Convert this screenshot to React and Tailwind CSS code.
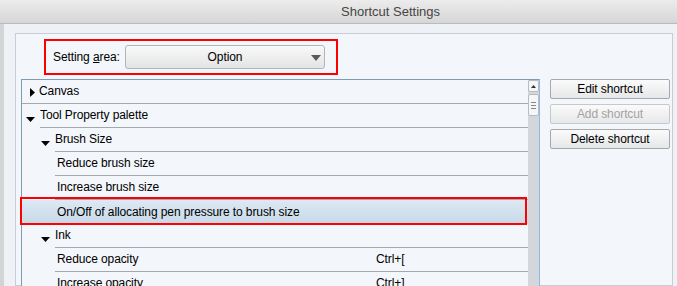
const rows = [
  { label: "Canvas", level: 0, arrow: "right" },
  { label: "Tool Property palette", level: 1, arrow: "down" },
  { label: "Brush Size", level: 2, arrow: "down" },
  { label: "Reduce brush size", level: 3 },
  { label: "Increase brush size", level: 3 },
  { label: "On/Off of allocating pen pressure to brush size", level: 3, selected: true },
  { label: "Ink", level: 2, arrow: "down" },
  { label: "Reduce opacity", level: 3, key: "Ctrl+[" },
  { label: "Increase opacity", level: 3, key: "Ctrl+]" },
];

function DownArrow({ className }) {
  return (
    <svg width="9" height="5" viewBox="0 0 9 5" className={className}>
      <path d="M0 0H9L4.5 5Z" fill="#000" />
    </svg>
  );
}

function RightArrow({ className }) {
  return (
    <svg width="5" height="9" viewBox="0 0 5 9" className={className}>
      <path d="M0 0V9L5 4.5Z" fill="#000" />
    </svg>
  );
}

function Row({ row }) {
  // leaf rows: line starts at the text, text has a 2px nudge
  if (row.level === 0) {
    return (
      <div className="flex h-[24px] items-center border-b border-[#a4a8ac] pb-[1px] pl-[8px]">
        <RightArrow className="mt-[2px]" />
        <span className="ml-[4px]">{row.label}</span>
      </div>
    );
  }
  const spacer = row.level === 1 ? "w-[18px]" : "w-[33px]";
  const arrowPad = row.level === 1 ? "pl-[4px]" : "pl-[19px]";
  return (
    <div className="relative flex h-[24px]">
      <div className={`flex ${spacer} ${arrowPad} shrink-0 items-center`}>
        {row.arrow && <DownArrow className="mt-[7px]" />}
      </div>
      <div
        className={`flex flex-1 items-center border-b border-[#a4a8ac] pb-[1px] ${
          row.level === 3 ? "pl-[2px]" : ""
        }`}
      >
        <span className="w-[319px] shrink-0">{row.label}</span>
        {row.key && <span>{row.key}</span>}
      </div>
    </div>
  );
}

function SelectedRow({ row }) {
  return (
    <div className="relative flex h-[24px] bg-gradient-to-b from-[#dde9f4] to-[#c7d9e8]">
      <div className="w-[33px] shrink-0" />
      <div className="flex flex-1 items-center pb-[1px] pl-[2px]">{row.label}</div>
      {/* red annotation frame */}
      <div className="pointer-events-none absolute -top-[3px] -bottom-[1px] -left-[2px] right-[1px] border-2 border-[#ff0000]" />
    </div>
  );
}

function Scrollbar() {
  return (
    <div className="flex w-[11px] shrink-0 flex-col bg-[#d3d7db]">
      <div className="flex h-[12px] shrink-0 items-center justify-center rounded-[2px] border border-[#b8bcc0] bg-[#f4f6f8]">
        <svg width="5" height="3" viewBox="0 0 5 3">
          <path d="M0 3H5L2.5 0Z" fill="#333" />
        </svg>
      </div>
      <div className="mt-[2px] flex h-[22px] shrink-0 flex-col items-center justify-center gap-[2px] rounded-[2px] border border-[#b8bcc0] bg-[#f4f6f8]">
        <div className="h-px w-[5px] bg-[#888]" />
        <div className="h-px w-[5px] bg-[#888]" />
        <div className="h-px w-[5px] bg-[#888]" />
      </div>
    </div>
  );
}

function Button({ children, disabled }) {
  return (
    <button
      className={`h-[20px] w-[120px] shrink-0 rounded-[2px] border bg-gradient-to-b from-[#fbfbfb] to-[#e6e7e8] text-[12px] leading-none ${
        disabled ? "border-[#c6c9cc] text-[#a3a3a3]" : "border-[#a6a9ac] text-black"
      }`}
    >
      {children}
    </button>
  );
}

export default function App() {
  return (
    <div
      className="h-[286px] w-[677px] overflow-hidden bg-[#eef2f7] text-[12px] tracking-[-0.1px] text-black"
      style={{ fontFamily: '"Liberation Sans", Arial, sans-serif' }}
    >
      <div className="flex h-[24px] items-center border-b border-[#b9bcbf] bg-gradient-to-b from-[#ececec] to-[#d6d6d6] pl-[341px] text-[13px] tracking-normal text-[#454545]">
        Shortcut Settings
      </div>

      <div className="flex h-[262px] border-l-4 border-[#d2d4d6]">
        <div className="ml-[11px] mt-[9px] flex w-[658px] shrink-0 flex-col border border-[#c9cdd2] bg-[#f3f6fa]">
          <div className="ml-[28px] mt-[5px] flex h-[36px] w-[294px] shrink-0 items-center border-2 border-[#ff0000] pl-[7px]">
            <span className="w-[72px] shrink-0">
              Setting <span className="underline">a</span>rea:
            </span>
            <div className="relative flex h-[24px] w-[200px] shrink-0 items-center justify-center rounded-[3px] border border-[#b3b6b9] bg-gradient-to-b from-[#f9f9f9] to-[#e3e4e5]">
              Option
              <svg width="10" height="6" viewBox="0 0 10 6" className="absolute right-[3px] top-[9px]">
                <path d="M0 0H10L5 6Z" fill="#5a5a5a" />
              </svg>
            </div>
          </div>

          <div className="ml-[5px] mt-[4px] flex shrink-0 gap-[10px]">
            <div className="flex w-[519px] shrink-0 border-l border-t border-r border-[#7d9cb6] border-r-[#8fbbe0] bg-[#f3f6fa]">
              <div className="flex-1">
                {rows.map((row) =>
                  row.selected ? <SelectedRow key={row.label} row={row} /> : <Row key={row.label} row={row} />
                )}
              </div>
              <Scrollbar />
            </div>

            <div className="flex flex-col gap-[5px]">
              <Button>Edit shortcut</Button>
              <Button disabled>Add shortcut</Button>
              <Button>Delete shortcut</Button>
            </div>
          </div>
        </div>
      </div>
    </div>
  );
}
